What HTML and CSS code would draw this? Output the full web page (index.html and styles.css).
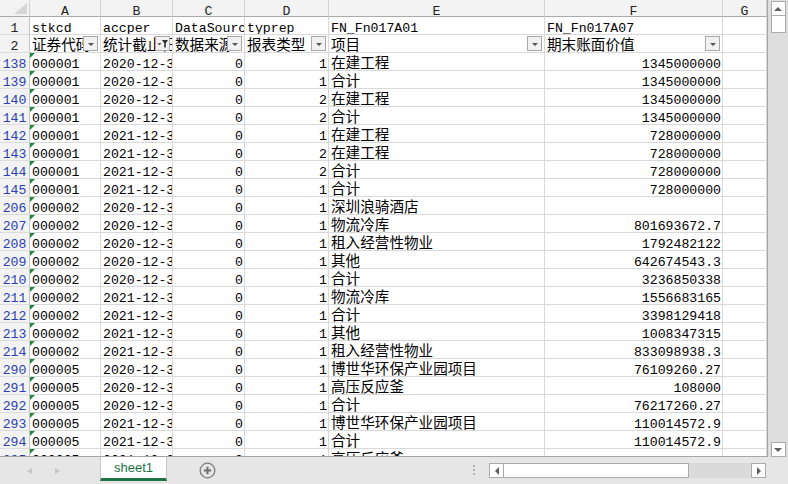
FILE: index.html
```html
<!DOCTYPE html>
<html lang="zh">
<head>
<meta charset="utf-8">
<title>sheet1</title>
<link rel="stylesheet" href="styles.css">
</head>
<body>
<div class="window">
  <div class="main">
    <div class="sheet">
      <div class="row heads">
        <div class="corner"><svg width="29" height="16" viewBox="0 0 29 16"><polygon points="14,14 27,14 27,3" fill="#d6d6d6"/></svg></div>
        <div class="ch">A</div><div class="ch">B</div><div class="ch">C</div><div class="ch">D</div><div class="ch">E</div><div class="ch">F</div><div class="ch">G</div>
      </div>
      <div class="row">
        <div class="rh">1</div>
        <div class="c">stkcd</div><div class="c">accper</div><div class="c">DataSource</div><div class="c">typrep</div><div class="c">FN_Fn017A01</div><div class="c">FN_Fn017A07</div><div class="c"></div>
      </div>
      <div class="row">
        <div class="rh">2</div>
        <div class="c"><span class="zh">证券代码</span><span class="fbtn"><i class="dd"></i></span></div>
        <div class="c"><span class="zh">统计截止日期</span><span class="fbtn"><svg width="13" height="13" viewBox="0 0 13 13"><polygon points="1.5,6 5.5,6 3.5,8.5" fill="#555"/><polygon points="6,3 12,3 9.8,6.2 9.8,10.5 8.2,10.5 8.2,6.2" fill="#333"/></svg></span></div>
        <div class="c"><span class="zh">数据来源</span><span class="fbtn"><i class="dd"></i></span></div>
        <div class="c"><span class="zh">报表类型</span><span class="fbtn"><i class="dd"></i></span></div>
        <div class="c"><span class="zh">项目</span><span class="fbtn"><i class="dd"></i></span></div>
        <div class="c"><span class="zh">期末账面价值</span><span class="fbtn"><i class="dd"></i></span></div>
        <div class="c"></div>
      </div>

      <div class="row"><div class="rh hit">138</div><div class="c txt">000001</div><div class="c">2020-12-31</div><div class="c num">0</div><div class="c num">1</div><div class="c"><span class="zh">在建工程</span></div><div class="c num">1345000000</div><div class="c"></div></div>
      <div class="row"><div class="rh hit">139</div><div class="c txt">000001</div><div class="c">2020-12-31</div><div class="c num">0</div><div class="c num">1</div><div class="c"><span class="zh">合计</span></div><div class="c num">1345000000</div><div class="c"></div></div>
      <div class="row"><div class="rh hit">140</div><div class="c txt">000001</div><div class="c">2020-12-31</div><div class="c num">0</div><div class="c num">2</div><div class="c"><span class="zh">在建工程</span></div><div class="c num">1345000000</div><div class="c"></div></div>
      <div class="row"><div class="rh hit">141</div><div class="c txt">000001</div><div class="c">2020-12-31</div><div class="c num">0</div><div class="c num">2</div><div class="c"><span class="zh">合计</span></div><div class="c num">1345000000</div><div class="c"></div></div>
      <div class="row"><div class="rh hit">142</div><div class="c txt">000001</div><div class="c">2021-12-31</div><div class="c num">0</div><div class="c num">1</div><div class="c"><span class="zh">在建工程</span></div><div class="c num">728000000</div><div class="c"></div></div>
      <div class="row"><div class="rh hit">143</div><div class="c txt">000001</div><div class="c">2021-12-31</div><div class="c num">0</div><div class="c num">2</div><div class="c"><span class="zh">在建工程</span></div><div class="c num">728000000</div><div class="c"></div></div>
      <div class="row"><div class="rh hit">144</div><div class="c txt">000001</div><div class="c">2021-12-31</div><div class="c num">0</div><div class="c num">2</div><div class="c"><span class="zh">合计</span></div><div class="c num">728000000</div><div class="c"></div></div>
      <div class="row"><div class="rh hit">145</div><div class="c txt">000001</div><div class="c">2021-12-31</div><div class="c num">0</div><div class="c num">1</div><div class="c"><span class="zh">合计</span></div><div class="c num">728000000</div><div class="c"></div></div>
      <div class="row"><div class="rh hit">206</div><div class="c txt">000002</div><div class="c">2020-12-31</div><div class="c num">0</div><div class="c num">1</div><div class="c"><span class="zh">深圳浪骑酒店</span></div><div class="c num"></div><div class="c"></div></div>
      <div class="row"><div class="rh hit">207</div><div class="c txt">000002</div><div class="c">2020-12-31</div><div class="c num">0</div><div class="c num">1</div><div class="c"><span class="zh">物流冷库</span></div><div class="c num">801693672.7</div><div class="c"></div></div>
      <div class="row"><div class="rh hit">208</div><div class="c txt">000002</div><div class="c">2020-12-31</div><div class="c num">0</div><div class="c num">1</div><div class="c"><span class="zh">租入经营性物业</span></div><div class="c num">1792482122</div><div class="c"></div></div>
      <div class="row"><div class="rh hit">209</div><div class="c txt">000002</div><div class="c">2020-12-31</div><div class="c num">0</div><div class="c num">1</div><div class="c"><span class="zh">其他</span></div><div class="c num">642674543.3</div><div class="c"></div></div>
      <div class="row"><div class="rh hit">210</div><div class="c txt">000002</div><div class="c">2020-12-31</div><div class="c num">0</div><div class="c num">1</div><div class="c"><span class="zh">合计</span></div><div class="c num">3236850338</div><div class="c"></div></div>
      <div class="row"><div class="rh hit">211</div><div class="c txt">000002</div><div class="c">2021-12-31</div><div class="c num">0</div><div class="c num">1</div><div class="c"><span class="zh">物流冷库</span></div><div class="c num">1556683165</div><div class="c"></div></div>
      <div class="row"><div class="rh hit">212</div><div class="c txt">000002</div><div class="c">2021-12-31</div><div class="c num">0</div><div class="c num">1</div><div class="c"><span class="zh">合计</span></div><div class="c num">3398129418</div><div class="c"></div></div>
      <div class="row"><div class="rh hit">213</div><div class="c txt">000002</div><div class="c">2021-12-31</div><div class="c num">0</div><div class="c num">1</div><div class="c"><span class="zh">其他</span></div><div class="c num">1008347315</div><div class="c"></div></div>
      <div class="row"><div class="rh hit">214</div><div class="c txt">000002</div><div class="c">2021-12-31</div><div class="c num">0</div><div class="c num">1</div><div class="c"><span class="zh">租入经营性物业</span></div><div class="c num">833098938.3</div><div class="c"></div></div>
      <div class="row"><div class="rh hit">290</div><div class="c txt">000005</div><div class="c">2020-12-31</div><div class="c num">0</div><div class="c num">1</div><div class="c"><span class="zh">博世华环保产业园项目</span></div><div class="c num">76109260.27</div><div class="c"></div></div>
      <div class="row"><div class="rh hit">291</div><div class="c txt">000005</div><div class="c">2020-12-31</div><div class="c num">0</div><div class="c num">1</div><div class="c"><span class="zh">高压反应釜</span></div><div class="c num">108000</div><div class="c"></div></div>
      <div class="row"><div class="rh hit">292</div><div class="c txt">000005</div><div class="c">2020-12-31</div><div class="c num">0</div><div class="c num">1</div><div class="c"><span class="zh">合计</span></div><div class="c num">76217260.27</div><div class="c"></div></div>
      <div class="row"><div class="rh hit">293</div><div class="c txt">000005</div><div class="c">2021-12-31</div><div class="c num">0</div><div class="c num">1</div><div class="c"><span class="zh">博世华环保产业园项目</span></div><div class="c num">110014572.9</div><div class="c"></div></div>
      <div class="row"><div class="rh hit">294</div><div class="c txt">000005</div><div class="c">2021-12-31</div><div class="c num">0</div><div class="c num">1</div><div class="c"><span class="zh">合计</span></div><div class="c num">110014572.9</div><div class="c"></div></div>
      <div class="row"><div class="rh hit">295</div><div class="c txt">000005</div><div class="c">2021-12-31</div><div class="c num">0</div><div class="c num">1</div><div class="c"><span class="zh">高压反应釜</span></div><div class="c num"></div><div class="c"></div></div>
    </div>

    <div class="vscroll">
      <span class="sbtn"><i class="up"></i></span>
      <span class="vthumb"></span>
      <span class="vtrack"></span>
      <span class="sbtn"><i class="down"></i></span>
    </div>
  </div>

  <div class="tabbar">
    <div class="nav">
      <i class="nav-left"></i>
      <i class="nav-right"></i>
    </div>
    <div class="tab">sheet1</div>
    <div class="addsheet">
      <svg width="17" height="17" viewBox="0 0 17 17"><circle cx="8.5" cy="8.5" r="7.3" fill="none" stroke="#7d7d7d" stroke-width="1.3"/><path d="M8.5 4.8v7.4M4.8 8.5h7.4" stroke="#6f6f6f" stroke-width="2"/></svg>
    </div>
    <div class="splitter"><i></i><i></i><i></i></div>
    <div class="hscroll">
      <span class="sbtn"><i class="left"></i></span>
      <span class="hthumb"></span>
      <span class="htrack"></span>
      <span class="sbtn"><i class="right"></i></span>
    </div>
  </div>
</div>
</body>
</html>
```

FILE: styles.css
```css
html, body {
  margin: 0;
  padding: 0;
}

body {
  width: 788px;
  height: 484px;
  overflow: hidden;
  background: #ffffff;
  font-family: "Liberation Mono", "Noto Sans CJK SC", monospace;
  color: #000;
}

.window {
  display: flex;
  flex-direction: column;
  width: 788px;
  height: 484px;
}

.main {
  display: flex;
  height: 457px;
}

/* grid of cells */
.sheet {
  width: 767px;
  height: 456px;
  border-right: 1px solid #a6a6a6;
  border-bottom: 1px solid #a6a6a6;
  overflow: hidden;
  flex: none;
}

.row {
  display: grid;
  grid-template-columns: 30px 71px 72px 72px 84px 216px 178px 44px;
  height: 18px;
}

.row > div {
  box-sizing: border-box;
  border-right: 1px solid #d9d9d9;
  border-bottom: 1px solid #d9d9d9;
  overflow: hidden;
  white-space: nowrap;
  font-size: 13.2px;
  line-height: 23px;
  position: relative;
}

.c {
  padding: 0 2px;
}

.num {
  text-align: right;
  padding-right: 1px;
}

.zh {
  font-family: "Noto Sans CJK SC", sans-serif;
  font-size: 14.6px;
  line-height: 14px;
}

/* "number stored as text" marker */
.txt::before {
  content: "";
  position: absolute;
  left: 0;
  top: 0;
  border-top: 5px solid #1e8a3e;
  border-right: 5px solid transparent;
}

/* headers */
.heads {
  height: 17px;
}

.heads > div {
  background: #f3f3f3;
  border-right-color: #d4d4d4;
  border-bottom-color: #ababab;
  text-align: center;
  color: #222;
}

.corner {
  line-height: 0 !important;
}

.rh {
  background: #f3f3f3;
  border-right-color: #c4c4c4 !important;
  border-bottom-color: #dcdcdc !important;
  text-align: center;
  color: #222;
}

.rh.hit {
  color: #2a3fb0;
}

/* autofilter dropdowns */
.fbtn {
  position: absolute;
  right: 2px;
  bottom: 1px;
  width: 15px;
  height: 15px;
  box-sizing: border-box;
  border: 1px solid #a9a9a9;
  background: #f1f1f1;
  display: flex;
  align-items: center;
  justify-content: center;
}

.dd {
  width: 0;
  height: 0;
  border-left: 3px solid transparent;
  border-right: 3px solid transparent;
  border-top: 3px solid #555;
  margin-top: 1px;
}

/* vertical scrollbar */
.vscroll {
  width: 21px;
  background: #dedede;
  display: flex;
  flex-direction: column;
  align-items: center;
  padding: 1px 0 0 0;
  box-sizing: border-box;
}

.sbtn {
  box-sizing: border-box;
  width: 15px;
  height: 15px;
  border: 1px solid #ababab;
  background: #fff;
  display: flex;
  align-items: center;
  justify-content: center;
  flex: none;
}

.vthumb {
  box-sizing: border-box;
  width: 15px;
  height: 17px;
  border: 1px solid #ababab;
  border-top: none;
  background: #fff;
  flex: none;
}

.vtrack {
  flex: 1;
}

.up {
  border-left: 4px solid transparent;
  border-right: 4px solid transparent;
  border-bottom: 4px solid #5f5f5f;
}

.down {
  border-left: 4px solid transparent;
  border-right: 4px solid transparent;
  border-top: 4px solid #5f5f5f;
}

.left {
  border-top: 4px solid transparent;
  border-bottom: 4px solid transparent;
  border-right: 4px solid #5f5f5f;
}

.right {
  border-top: 4px solid transparent;
  border-bottom: 4px solid transparent;
  border-left: 4px solid #5f5f5f;
}

/* sheet tabs and horizontal scrollbar */
.tabbar {
  flex: 1;
  background: #e6e6e6;
  display: flex;
  align-items: flex-start;
}

.nav {
  width: 100px;
  height: 27px;
  display: flex;
  align-items: center;
  gap: 23px;
  padding-left: 27px;
  box-sizing: border-box;
}

.nav-left {
  border-top: 3.5px solid transparent;
  border-bottom: 3.5px solid transparent;
  border-right: 5px solid #c6c6c6;
}

.nav-right {
  border-top: 3.5px solid transparent;
  border-bottom: 3.5px solid transparent;
  border-left: 5px solid #c6c6c6;
}

.tab {
  box-sizing: border-box;
  width: 67px;
  height: 24px;
  background: #fff;
  border-left: 1px solid #c8c8c8;
  border-right: 1px solid #c8c8c8;
  border-bottom: 3px solid #217346;
  color: #217346;
  font-family: "Liberation Sans", "Noto Sans", sans-serif;
  font-size: 13px;
  text-align: center;
  line-height: 21px;
}

.addsheet {
  margin-left: 32px;
  margin-top: 5px;
  line-height: 0;
}

.splitter {
  margin-left: 257px;
  margin-top: 8px;
  display: flex;
  flex-direction: column;
  gap: 2px;
}

.splitter i {
  width: 2px;
  height: 2px;
  background: #b3b3b3;
}

.hscroll {
  margin-left: 14px;
  margin-top: 6px;
  width: 277px;
  height: 15px;
  display: flex;
  background: #dadada;
}

.hthumb {
  box-sizing: border-box;
  width: 185px;
  height: 15px;
  border: 1px solid #ababab;
  border-left: none;
  background: #fff;
}

.htrack {
  flex: 1;
}
```
